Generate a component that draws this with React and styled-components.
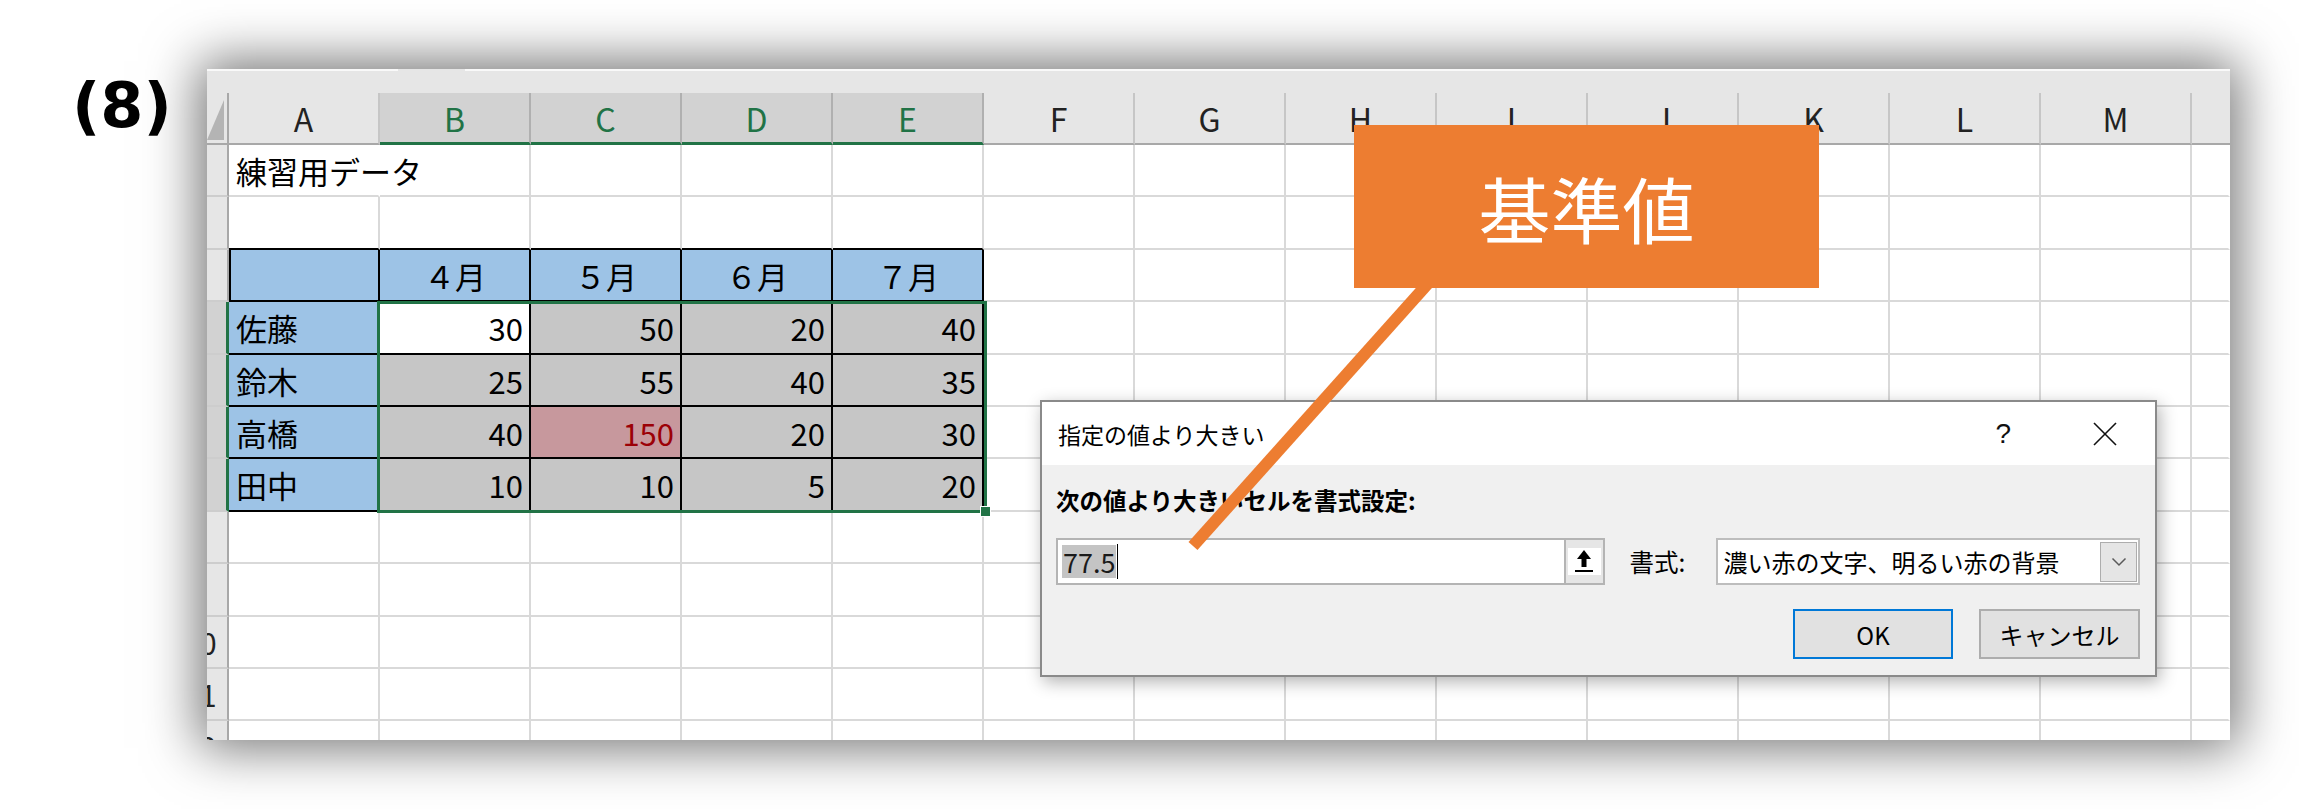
import React from 'react';
import styled, { createGlobalStyle } from 'styled-components';

const GlobalStyle = createGlobalStyle`
  html, body { margin: 0; padding: 0; background: #fff; }
  body { font-family: "Noto Sans CJK JP", "Noto Sans", sans-serif; }
`;

const JP = '"Noto Sans CJK JP", "Noto Sans", sans-serif';

const COLS = ['A', 'B', 'C', 'D', 'E', 'F', 'G', 'H', 'I', 'J', 'K', 'L', 'M', ''];
const ROW_H = [52, 53, 52, 53, 52, 52, 53, 52, 53, 52, 52, 52];
const GRID = '#d9d9d9';
const GREEN = '#217346';
const BLUE = '#9dc3e6';
const SEL_GRAY = '#c6c6c6';

const Page = styled.div`
  position: relative;
  width: 2299px;
  height: 809px;
  overflow: hidden;
  display: flex;
  align-items: flex-start;
  padding-top: 69px;
  box-sizing: border-box;
`;

const StepLabel = styled.div`
  flex: 0 0 207px;
  box-sizing: border-box;
  padding-left: 72px;
  margin-top: 1px;
  font-family: "DejaVu Sans", "Liberation Sans", sans-serif;
  font-weight: 700;
  font-size: 62px;
  line-height: 72px;
  color: #000;
`;

const ExcelWindow = styled.div`
  position: relative;
  flex: 0 0 2023px;
  height: 671px;
  overflow: hidden;
  background: #fff;
  box-shadow: 0 0 50px 8px rgba(0, 0, 0, 0.55);
  display: flex;
  flex-direction: column;
  font-family: ${JP};
`;

const TopStrip = styled.div`
  flex: 0 0 24px;
  background:
    linear-gradient(to right, #f9f9f9 0 191px, #e6e6e6 191px 258px, #f9f9f9 258px) top / 100% 2px no-repeat,
    #e6e6e6;
`;

const Sheet = styled.div`
  display: grid;
  grid-template-columns: 22px repeat(13, 151px) 38px;
  grid-template-rows: 52px ${ROW_H.map((h) => `${h}px`).join(' ')};
`;

const SelectAll = styled.div`
  position: relative;
  background: #e6e6e6;
  border-right: 2px solid #a8a8a8;
  border-bottom: 2px solid #a8a8a8;
  box-sizing: border-box;
  &::after {
    content: '';
    position: absolute;
    left: 0;
    top: 7px;
    width: 17px;
    height: 40px;
    background: #b4b4b4;
    clip-path: polygon(100% 0, 100% 100%, 0 100%);
  }
`;

const HeaderCell = styled.div`
  display: flex;
  align-items: center;
  justify-content: center;
  box-sizing: border-box;
  background: ${(p) => (p.$selected ? '#d2d2d2' : '#e6e6e6')};
  color: ${(p) => (p.$selected ? GREEN : '#222')};
  border-right: ${(p) => (p.$last ? 'none' : `2px solid ${p.$selected ? '#b0b0b0' : '#c6c6c6'}`)};
  border-bottom: ${(p) => (p.$selected ? `3px solid ${GREEN}` : '2px solid #a8a8a8')};
  font-size: 32px;
`;

const RowHead = styled.div`
  display: flex;
  align-items: center;
  overflow: hidden;
  box-sizing: border-box;
  background: ${(p) => (p.$selected ? '#d2d2d2' : '#e6e6e6')};
  border-right: ${(p) => (p.$selected ? `3px solid ${GREEN}` : '2px solid #a8a8a8')};
  border-bottom: 2px solid #cdcdcd;
`;

const RowNum = styled.span`
  flex: 0 0 58px;
  margin-left: -36px;
  text-align: center;
  font-size: 30px;
  color: #222;
`;

const Cell = styled.div`
  display: flex;
  align-items: center;
  justify-content: ${(p) => (p.$align === 'right' ? 'flex-end' : p.$align === 'center' ? 'center' : 'flex-start')};
  box-sizing: border-box;
  padding: 0 6px 0 7px;
  background: ${(p) => p.$bg || 'transparent'};
  color: ${(p) => p.$color || '#000'};
  border-right: 2px solid ${(p) => p.$br};
  border-bottom: 2px solid ${(p) => p.$bb};
  border-left: ${(p) => (p.$bl ? `2px solid ${p.$bl}` : 'none')};
  font-size: 31px;
  white-space: nowrap;
  overflow: ${(p) => (p.$overflow ? 'visible' : 'hidden')};
  position: relative;
  z-index: ${(p) => (p.$overflow ? 1 : 'auto')};
`;

const Selection = styled.div`
  position: absolute;
  left: 170px;
  top: 232px;
  width: 610px;
  height: 212px;
  box-sizing: border-box;
  border: 3px solid ${GREEN};
  pointer-events: none;
  z-index: 2;
`;

const FillHandle = styled.div`
  position: absolute;
  right: -7px;
  bottom: -7px;
  width: 9px;
  height: 9px;
  background: ${GREEN};
  border: 1px solid #fff;
`;

/* ---------- Dialog ---------- */
const Dialog = styled.div`
  position: absolute;
  left: 833px;
  top: 331px;
  width: 1117px;
  height: 277px;
  box-sizing: border-box;
  border: 2px solid #8a8a8a;
  background: #f0f0f0;
  box-shadow: 3px 5px 16px rgba(0, 0, 0, 0.3);
  display: flex;
  flex-direction: column;
  z-index: 3;
  color: #000;
`;

const TitleBar = styled.div`
  flex: 0 0 63px;
  background: #fff;
  display: flex;
  align-items: center;
  padding: 0 38px 0 16px;
  font-size: 23px;
`;

const TitleText = styled.span`
  flex: 1;
`;

const HelpMark = styled.span`
  font-family: "Liberation Sans", Arial, sans-serif;
  font-size: 28px;
  margin-right: 82px;
  color: #111;
`;

const DialogBody = styled.div`
  flex: 1;
  display: flex;
  flex-direction: column;
  padding: 0 15px 0 14px;
`;

const Prompt = styled.div`
  margin-top: 20px;
  font-size: 23.5px;
  line-height: 30px;
  font-weight: 700;
`;

const InputRow = styled.div`
  margin-top: 23px;
  display: flex;
  align-items: center;
  height: 47px;
`;

const RefInput = styled.div`
  width: 550px;
  height: 47px;
  box-sizing: border-box;
  border: 2px solid #b4b4b4;
  background: #fff;
  display: flex;
  align-items: center;
  padding-left: 4px;
`;

const Highlighted = styled.span`
  background: #c4c4c4;
  font-size: 27px;
  line-height: 33px;
  padding: 0 1px;
  color: #1a1a1a;
`;

const Caret = styled.span`
  width: 1px;
  height: 35px;
  background: #000;
  margin-left: 1px;
`;

const CollapseButton = styled.div`
  margin-left: auto;
  width: 39px;
  height: 100%;
  box-sizing: border-box;
  border-left: 2px solid #b4b4b4;
  background: #e6e6e6;
  display: flex;
  align-items: center;
  justify-content: center;
`;

const CollapseFace = styled.div`
  width: 33px;
  height: 27px;
  background: #fff;
  display: flex;
`;

const FormatLabel = styled.span`
  margin-left: 24px;
  width: 87px;
  font-size: 24.5px;
`;

const SelectBox = styled.div`
  width: 424px;
  height: 47px;
  box-sizing: border-box;
  border: 2px solid #bdbdbd;
  background: #fff;
  display: flex;
  align-items: center;
  padding-left: 5px;
  font-size: 24px;
`;

const DropButton = styled.div`
  margin-left: auto;
  margin-right: 1px;
  width: 37px;
  height: 40px;
  box-sizing: border-box;
  border: 1px solid #adadad;
  background: #e5e5e5;
  display: flex;
  align-items: center;
  justify-content: center;
`;

const ButtonRow = styled.div`
  margin-top: 24px;
  display: flex;
  justify-content: flex-end;
  gap: 26px;
`;

const DialogButton = styled.div`
  width: ${(p) => (p.$primary ? '160px' : '161px')};
  height: 50px;
  box-sizing: border-box;
  border: 2px solid ${(p) => (p.$primary ? '#0078d7' : '#adadad')};
  background: #e1e1e1;
  display: flex;
  align-items: center;
  justify-content: center;
  font-size: 24px;
`;

/* ---------- Annotation ---------- */
const Pointer = styled.svg`
  position: absolute;
  left: 0;
  top: 0;
  width: 2299px;
  height: 809px;
  pointer-events: none;
  z-index: 5;
`;

const Callout = styled.div`
  position: absolute;
  left: 1354px;
  top: 125px;
  width: 465px;
  height: 163px;
  background: #ed7d31;
  color: #fff;
  display: flex;
  align-items: center;
  justify-content: center;
  font-family: ${JP};
  font-size: 72px;
  z-index: 6;
`;

const NAMES = ['佐藤', '鈴木', '高橋', '田中'];
const VALUES = [
  [30, 50, 20, 40],
  [25, 55, 40, 35],
  [40, 150, 20, 30],
  [10, 10, 5, 20],
];
const MONTHS = ['４月', '５月', '６月', '７月'];

function cellSpec(r, c) {
  const inTable = r >= 2 && r <= 6 && c <= 4;
  const spec = { br: GRID, bb: GRID };
  if (c === 13) spec.br = 'transparent';
  if (inTable) {
    spec.br = '#000';
    spec.bb = '#000';
  }
  if (r === 1 && c <= 4) spec.bb = '#000';
  if (r === 0 && c === 0) {
    spec.text = '練習用データ';
    spec.overflow = true;
    spec.br = 'transparent';
  }
  if (r === 2 && c <= 4) {
    spec.bg = BLUE;
    if (c === 0) spec.bl = '#000';
    if (c >= 1) {
      spec.text = MONTHS[c - 1];
      spec.align = 'center';
    }
  }
  if (r >= 3 && r <= 6 && c <= 4) {
    const i = r - 3;
    if (c === 0) {
      spec.bg = BLUE;
      spec.text = NAMES[i];
    } else {
      const v = VALUES[i][c - 1];
      spec.text = String(v);
      spec.align = 'right';
      if (r === 3 && c === 1) spec.bg = '#fff';
      else if (v === 150) {
        spec.bg = '#c7989d';
        spec.color = '#9c0006';
      } else spec.bg = SEL_GRAY;
    }
  }
  return spec;
}

function UploadArrow() {
  return (
    <svg width="33" height="27" viewBox="0 0 33 27">
      <polygon points="16,2 9,11 23,11" fill="#000" />
      <rect x="13.5" y="10" width="5" height="9" fill="#000" />
      <rect x="7" y="22" width="18" height="2" fill="#000" />
    </svg>
  );
}

function Chevron() {
  return (
    <svg width="16" height="10" viewBox="0 0 16 10">
      <polyline points="1.5,1.5 8,8 14.5,1.5" fill="none" stroke="#5a5a5a" strokeWidth="1.5" />
    </svg>
  );
}

function CloseX() {
  return (
    <svg width="24" height="24" viewBox="0 0 24 24">
      <line x1="1" y1="1" x2="23" y2="23" stroke="#111" strokeWidth="1.6" />
      <line x1="23" y1="1" x2="1" y2="23" stroke="#111" strokeWidth="1.6" />
    </svg>
  );
}

export default function App() {
  const rows = ROW_H.map((_, r) => r);
  return (
    <Page>
      <GlobalStyle />
      <StepLabel>(8)</StepLabel>
      <ExcelWindow>
        <TopStrip />
        <Sheet>
          <SelectAll />
          {COLS.map((name, c) => (
            <HeaderCell key={`h${c}`} $selected={c >= 1 && c <= 4} $last={c === 13}>
              {name}
            </HeaderCell>
          ))}
          {rows.map((r) => (
            <React.Fragment key={`r${r}`}>
              <RowHead $selected={r >= 3 && r <= 6}>
                {r >= 9 && <RowNum>{r + 1}</RowNum>}
              </RowHead>
              {COLS.map((_, c) => {
                const s = cellSpec(r, c);
                return (
                  <Cell
                    key={`c${r}-${c}`}
                    $bg={s.bg}
                    $br={s.br}
                    $bb={s.bb}
                    $bl={s.bl}
                    $align={s.align}
                    $color={s.color}
                    $overflow={s.overflow}
                  >
                    {s.text}
                  </Cell>
                );
              })}
            </React.Fragment>
          ))}
        </Sheet>
        <Selection>
          <FillHandle />
        </Selection>
        <Dialog>
          <TitleBar>
            <TitleText>指定の値より大きい</TitleText>
            <HelpMark>?</HelpMark>
            <CloseX />
          </TitleBar>
          <DialogBody>
            <Prompt>次の値より大きいセルを書式設定:</Prompt>
            <InputRow>
              <RefInput>
                <Highlighted>77.5</Highlighted>
                <Caret />
                <CollapseButton>
                  <CollapseFace>
                    <UploadArrow />
                  </CollapseFace>
                </CollapseButton>
              </RefInput>
              <FormatLabel>書式:</FormatLabel>
              <SelectBox>
                濃い赤の文字、明るい赤の背景
                <DropButton>
                  <Chevron />
                </DropButton>
              </SelectBox>
            </InputRow>
            <ButtonRow>
              <DialogButton $primary>OK</DialogButton>
              <DialogButton>キャンセル</DialogButton>
            </ButtonRow>
          </DialogBody>
        </Dialog>
      </ExcelWindow>
      <Pointer viewBox="0 0 2299 809">
        <line x1="1193" y1="546" x2="1440" y2="270" stroke="#ed7d31" strokeWidth="12" />
      </Pointer>
      <Callout>基準値</Callout>
    </Page>
  );
}
